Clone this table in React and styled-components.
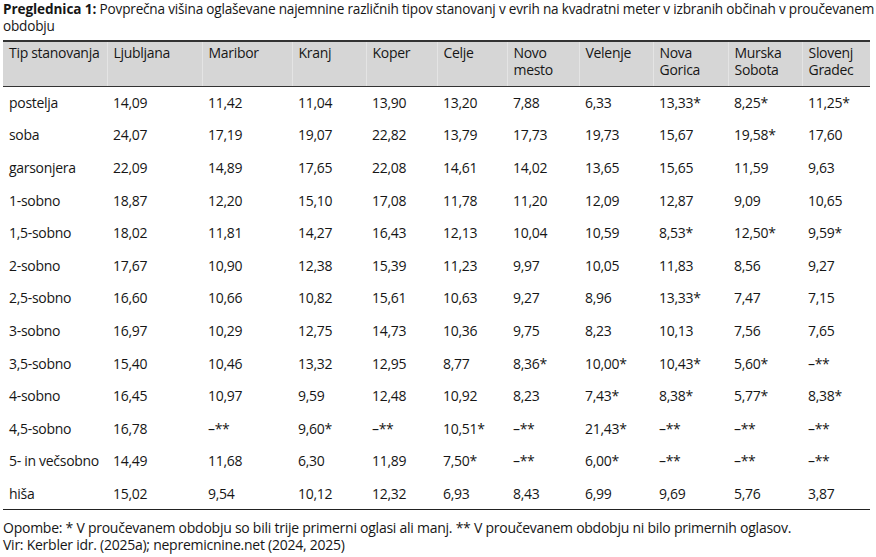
import React from 'react'
import styled, { createGlobalStyle } from 'styled-components'

const cols = [
  { name: 'Tip stanovanja', w: 104 },
  { name: 'Ljubljana', w: 95 },
  { name: 'Maribor', w: 90 },
  { name: 'Kranj', w: 74 },
  { name: 'Koper', w: 71 },
  { name: 'Celje', w: 70 },
  { name: ['Novo', 'mesto'], w: 72 },
  { name: 'Velenje', w: 74 },
  { name: ['Nova', 'Gorica'], w: 75 },
  { name: ['Murska', 'Sobota'], w: 74 },
  { name: ['Slovenj', 'Gradec'], w: 68 },
]

const rows = [
  ['postelja', '14,09', '11,42', '11,04', '13,90', '13,20', '7,88', '6,33', '13,33*', '8,25*', '11,25*'],
  ['soba', '24,07', '17,19', '19,07', '22,82', '13,79', '17,73', '19,73', '15,67', '19,58*', '17,60'],
  ['garsonjera', '22,09', '14,89', '17,65', '22,08', '14,61', '14,02', '13,65', '15,65', '11,59', '9,63'],
  ['1-sobno', '18,87', '12,20', '15,10', '17,08', '11,78', '11,20', '12,09', '12,87', '9,09', '10,65'],
  ['1,5-sobno', '18,02', '11,81', '14,27', '16,43', '12,13', '10,04', '10,59', '8,53*', '12,50*', '9,59*'],
  ['2-sobno', '17,67', '10,90', '12,38', '15,39', '11,23', '9,97', '10,05', '11,83', '8,56', '9,27'],
  ['2,5-sobno', '16,60', '10,66', '10,82', '15,61', '10,63', '9,27', '8,96', '13,33*', '7,47', '7,15'],
  ['3-sobno', '16,97', '10,29', '12,75', '14,73', '10,36', '9,75', '8,23', '10,13', '7,56', '7,65'],
  ['3,5-sobno', '15,40', '10,46', '13,32', '12,95', '8,77', '8,36*', '10,00*', '10,43*', '5,60*', '–**'],
  ['4-sobno', '16,45', '10,97', '9,59', '12,48', '10,92', '8,23', '7,43*', '8,38*', '5,77*', '8,38*'],
  ['4,5-sobno', '16,78', '–**', '9,60*', '–**', '10,51*', '–**', '21,43*', '–**', '–**', '–**'],
  ['5- in večsobno', '14,49', '11,68', '6,30', '11,89', '7,50*', '–**', '6,00*', '–**', '–**', '–**'],
  ['hiša', '15,02', '9,54', '10,12', '12,32', '6,93', '8,43', '6,99', '9,69', '5,76', '3,87'],
]

export default function App() {
  return (
    <Page>
      <GlobalStyle />
      <Caption>
        <Label>Preglednica 1:</Label>{' '}
        Povprečna višina oglaševane najemnine različnih tipov stanovanj v evrih na kvadratni meter
        v izbranih občinah v proučevanem
        <br />
        obdobju
      </Caption>
      <Table>
        <colgroup>
          {cols.map((c, i) => <Col key={i} $w={c.w} />)}
        </colgroup>
        <thead>
          <tr>
            {cols.map((c, i) => (
              <Head key={i}>
                {Array.isArray(c.name) ? <>{c.name[0]}<br />{c.name[1]}</> : c.name}
              </Head>
            ))}
          </tr>
        </thead>
        <tbody>
          {rows.map((r, i) => (
            <Row key={i}>
              {r.map((v, j) => <Cell key={j}>{v}</Cell>)}
            </Row>
          ))}
        </tbody>
      </Table>
      <Notes>
        <div>Opombe: * V proučevanem obdobju so bili trije primerni oglasi ali manj. ** V proučevanem obdobju ni bilo primernih oglasov.</div>
        <div>Vir: Kerbler idr. (2025a); nepremicnine.net (2024, 2025)</div>
      </Notes>
    </Page>
  )
}

const GlobalStyle = createGlobalStyle`
  body {
    margin: 0;
    background: #fff;
    color: #161616;
    font-family: "Open Sans", "Noto Sans", sans-serif;
  }
`

const Page = styled.div`
  width: 876px;
  height: 557px;
  padding: 0 5px 0 3px;
  box-sizing: border-box;
  overflow: hidden;
`

const Caption = styled.div`
  font-size: 13.6px;
  line-height: 17px;
  letter-spacing: -0.2px;
  white-space: nowrap;
  height: 40px;
`

const Label = styled.span`
  font-weight: 700;
  letter-spacing: -0.1px;
`

const Table = styled.table`
  width: 867px;
  border-collapse: collapse;
  table-layout: fixed;
  font-size: 14px;
  letter-spacing: -0.3px;
  border-bottom: 1.5px solid #222;
`

const Col = styled.col`
  width: ${p => p.$w}px;
`

const Head = styled.th`
  background: #d6d6d6;
  text-align: left;
  font-weight: 400;
  vertical-align: top;
  line-height: 17px;
  height: 45px;
  box-sizing: border-box;
  padding: 2px 0 0 6px;
  border-top: 2px solid #333;
  border-bottom: 1.5px solid #333;
  border-left: 1px solid #e4e4e4;
  &:first-child {
    border-left: none;
  }
`

const Row = styled.tr`
  height: 32.6px;
`

const Cell = styled.td`
  padding: 0 0 0 6px;
  white-space: nowrap;
  vertical-align: middle;
`

const Notes = styled.div`
  margin-top: 9px;
  font-size: 14px;
  line-height: 17px;
  letter-spacing: -0.25px;
`
